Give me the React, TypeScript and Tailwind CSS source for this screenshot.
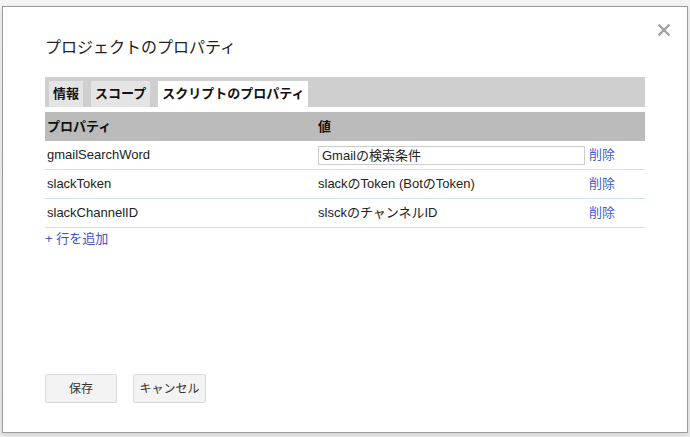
import { useState } from "react";

const rows = [
  { key: "gmailSearchWord", value: "Gmailの検索条件", editing: true },
  { key: "slackToken", value: "slackのToken (BotのToken)", editing: false },
  { key: "slackChannelID", value: "slsckのチャンネルID", editing: false },
];

const tabs = ["情報", "スコープ", "スクリプトのプロパティ"];

const font = { fontFamily: '"Liberation Sans", "Noto Sans CJK JP", sans-serif' };

export default function App() {
  const [active] = useState(2);

  return (
    <div
      className="w-[690px] h-[437px] bg-gradient-to-b from-[#f4f4f4] to-[#ececec] pt-[6px] pl-[2px]"
      style={font}
    >
      <div className="relative flex flex-col w-[686px] h-[427px] border border-[#9c9c9c] bg-white px-[42px] pt-[31px] pb-[29px] shadow-[0_2px_6px_rgba(0,0,0,0.12)]">
        {/* close */}
        <button className="absolute right-[17px] top-[17px] w-[12px] h-[12px]">
          <svg viewBox="0 0 12 12" width="12" height="12">
            <path d="M1.5 1.5 L10.5 10.5 M10.5 1.5 L1.5 10.5" stroke="#a3a3a3" strokeWidth="2.4" strokeLinecap="square" />
          </svg>
        </button>

        <h1 className="text-[16px] leading-[20px] text-[#222]">プロジェクトのプロパティ</h1>

        <div className="mt-[19px] flex items-end gap-2 h-[30px] bg-[#cfcfcf] px-1">
          {tabs.map((t, i) => (
            <div
              key={t}
              className={
                "h-[26px] px-1 text-[13px] leading-[26px] font-bold text-[#111] " +
                (i === active ? "bg-white" : "bg-[#e4e4e4]")
              }
            >
              {t}
            </div>
          ))}
        </div>

        <div className="mt-[5px] w-[600px]">
          <div className="grid grid-cols-[271px_271px_58px] h-[29px] bg-[#bbbbbb] text-[13px] font-bold text-[#111] items-center">
            <div className="pl-[2px]">プロパティ</div>
            <div className="pl-[2px]">値</div>
            <div />
          </div>
          {rows.map((r) => (
            <div
              key={r.key}
              className="grid grid-cols-[271px_271px_58px] h-[29px] border-b border-[#cfe0f3] items-center text-[13px] text-[#222]"
            >
              <div className="pl-[2px]">{r.key}</div>
              <div className="pl-[2px]">
                {r.editing ? (
                  <div className="w-[267px] h-[19px] border border-[#cccccc] pl-[3px] leading-[17px]">
                    {r.value}
                  </div>
                ) : (
                  r.value
                )}
              </div>
              <div className="pl-[2px] text-[#3d5fd6]">削除</div>
            </div>
          ))}
          <div className="mt-[1px] text-[13px] text-[#4151c9]">+ 行を追加</div>
        </div>

        <div className="mt-auto flex gap-4">
          <button className="w-[72px] h-[29px] rounded-[2px] border border-[#dadada] bg-[#f3f3f3] text-[12px] text-[#333]">
            保存
          </button>
          <button className="w-[73px] h-[29px] rounded-[2px] border border-[#dadada] bg-[#f3f3f3] text-[12px] text-[#333]">
            キャンセル
          </button>
        </div>
      </div>
    </div>
  );
}
